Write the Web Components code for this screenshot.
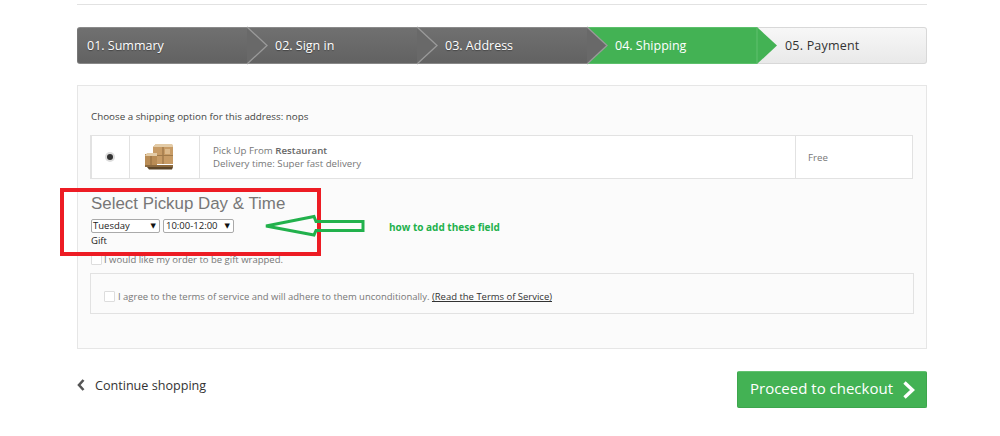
<!DOCTYPE html>
<html lang="en"><head><meta charset="utf-8"><title>Checkout</title>
<style>
html,body{margin:0;background:#fff}
body{font-family:"Open Sans",sans-serif;width:1000px;height:436px;overflow:hidden;position:relative}
</style></head><body>
<checkout-page></checkout-page>
<script>
const def=(name,css,html)=>{customElements.define(name,class extends HTMLElement{
  constructor(){super();this.attachShadow({mode:'open'}).innerHTML=`<style>${css}</style>${typeof html==='function'?html(this):html}`;}
});};
def('step-bar',`
:host{display:flex;height:37px;box-sizing:border-box;font:12.5px/37px "Open Sans",sans-serif}
`,`<slot></slot>`);
def('step-item',`
:host{flex:0 0 170px;display:block;position:relative;box-sizing:border-box;height:37px;padding-left:28px;color:#fff;
 background:linear-gradient(#707070,#626262);border-top:1px solid #8a8a8a;border-bottom:1px solid #888;line-height:35px;text-shadow:0 1px 1px rgba(0,0,0,.35)}
:host([first]){border-radius:3px 0 0 3px;padding-left:9px;border-left:1px solid #777}
:host([active]){background:#43b254;border-color:#5cc06b;text-shadow:none}
:host([last]){background:linear-gradient(#f7f7f7,#e9e9e9);border:1px solid #d8d8d8;border-left:0;border-radius:0 3px 3px 0;color:#333;text-shadow:none;letter-spacing:.2px}
svg{position:absolute;left:100%;top:-1px;width:20px;height:37px;z-index:2;overflow:visible}
`,h=>{
 const a=h.hasAttribute('active');
 const arrow=h.hasAttribute('last')?'':`<svg viewBox="0 0 20 37" aria-hidden="true"><polygon points="0,0 20,18.5 0,37" fill="${a?'#43b254':'#696969'}"/>${a?'<line x1="0" y1="1" x2="0" y2="36" stroke="#60c06e"/>':'<polyline points="0,0 20,18.5 0,37" fill="none" stroke="#9a9a9a" stroke-width="1.3"/>'}</svg>`;
 return `<slot></slot>${arrow}`;
});
def('ship-table',`
:host{display:grid;grid-template-columns:38px 70px 1fr 117px;height:44px;box-sizing:border-box;margin:11px 0 0 -1px;width:823px;background:#fff;border:1px solid #e2e2e2;font-size:9.7px;color:#777;line-height:13px}
div{border-left:1px solid #e2e2e2;display:flex;align-items:center;justify-content:center}
div:first-child{border-left:0}
.t{justify-content:flex-start;padding-left:13px;display:block;padding-top:8px}
.f{justify-content:flex-start;padding-left:12px}
b{font-weight:600;color:#666}
.r{width:6px;height:6px;border-radius:50%;background:#333;box-shadow:0 0 0 2px #ddd;margin-right:1px}
svg{margin-right:9px}
`,`<div><span class="r"></span></div>
<div><svg width="30" height="26" viewBox="0 0 30 26" aria-hidden="true">
<polygon points="8,3 11,0 27,0 28,3 28,20 8,20" fill="#c89c66"/><polygon points="8,3 11,0 27,0 28,3" fill="#e3cba6"/>
<rect x="17.5" y="3" width="1" height="17" fill="#8f6b3e"/><rect x="8" y="11" width="20" height="1" fill="#a07a4a"/><rect x="20" y="5" width="5" height="5" fill="#dcb98a"/>
<rect x="0" y="10" width="12" height="11" fill="#b98c55"/><polygon points="0,12 2,9 12,9 12,12" fill="#e3cba6"/><rect x="5.5" y="12" width="1" height="9" fill="#8f6b3e"/>
<rect x="0" y="21" width="28" height="2" fill="#8c6a3f"/><polygon points="2,23 28,23 27,25.5 4,25.5" fill="#5d4629"/></svg></div>
<div class="t">Pick Up From <b>Restaurant</b><br>Delivery time: Super fast delivery</div>
<div class="f">Free</div>`);
def('fake-select',`
:host{display:inline-flex;align-items:center;justify-content:space-between;box-sizing:border-box;height:14px;border:1px solid #aaa;border-radius:2px;background:#fff;padding:0 3px 0 1px;font:9.5px/12px "Open Sans",sans-serif;color:#222}
i{font:normal 7px/12px "DejaVu Sans",sans-serif;color:#111}
`,`<slot></slot><i>▼</i>`);
def('check-box',`
:host{display:inline-block;box-sizing:border-box;width:11px;height:11px;border:1px solid #ddd;background:#fff;border-radius:1px;vertical-align:middle}
`,``);
def('terms-box',`
:host{display:flex;align-items:center;gap:3px;box-sizing:border-box;width:824px;height:41px;margin:7px 0 0 -1px;border:1px solid #e2e2e2;padding:6px 0 0 13px;font-size:9.48px;color:#777}
a{color:#333;text-decoration:underline}
`,`<check-box></check-box><span>I agree to the terms of service and will adhere to them unconditionally. <a>(Read the Terms of Service)</a></span>`);
def('green-button',`
:host{display:flex;align-items:center;gap:10px;width:190px;height:37px;box-sizing:border-box;background:#43b254;border:1px solid #3da64d;border-top-color:#62c270;border-radius:2px;color:#fff;font:500 15px "Open Sans",sans-serif;padding:0 0 3px 12px}
svg{width:14px;height:18px;margin-top:3px}
`,`<slot></slot><svg viewBox="0 0 14 18" aria-hidden="true"><polyline points="1.5,1.5 9.5,9 1.5,16.5" fill="none" stroke="#fff" stroke-width="3.4"/></svg>`);
def('note-overlay',`
:host{position:absolute;left:0;top:0;width:1000px;height:436px;display:block;pointer-events:none}
.red{position:absolute;left:60px;top:188px;width:261px;height:68px;box-sizing:border-box;border:4px solid #ed1c24}
svg{position:absolute;left:260px;top:210px;width:110px;height:32px;overflow:visible}
p{position:absolute;left:389px;top:221px;margin:0;font:700 10px/13px "Open Sans",sans-serif;color:#22b14c;white-space:nowrap}
`,`<div class="red"></div>
<svg viewBox="0 0 110 32" aria-hidden="true"><polygon points="6,16 54,6.5 56,11.5 103,11.5 103,20.5 56,20.5 54,25" fill="none" stroke="#22b14c" stroke-width="3"/></svg>
<p>how to add these field</p>`);
def('checkout-page',`
:host{display:block;box-sizing:border-box;width:850px;margin-left:77px;padding-top:4px;color:#333}
.top{height:1px;background:#e2e2e2}
step-bar{margin-top:22px}
.panel{margin-top:21px;height:264px;box-sizing:border-box;border:1px solid #e6e6e6;background:#fbfbfb;padding:23px 13px 0}
.lead{font-size:9.8px;line-height:14px;margin:0;color:#444;padding-top:1px}
h2{font:400 16.9px/18px "Liberation Sans",sans-serif;color:#777;margin:16px 0 0}
.sel{display:flex;gap:3px;margin-top:6px}
.gift{font-size:9.5px;line-height:13px;color:#222;margin-top:1px}
.wrap{font-size:9.5px;line-height:13px;color:#777;margin-top:6px;display:flex;gap:2px;align-items:center;height:13px}
.foot{display:flex;justify-content:space-between;align-items:center;margin-top:22px}
.back{display:flex;align-items:center;gap:10px;font:500 12.6px "Open Sans",sans-serif;color:#333;margin-top:-9px}
`,`<div class="top"></div>
<step-bar><step-item first>01. Summary</step-item><step-item>02. Sign in</step-item><step-item>03. Address</step-item><step-item active>04. Shipping</step-item><step-item last>05. Payment</step-item></step-bar>
<div class="panel">
<p class="lead">Choose a shipping option for this address: nops</p>
<ship-table></ship-table>
<h2>Select Pickup Day &amp; Time</h2>
<div class="sel"><fake-select style="width:69px">Tuesday</fake-select><fake-select style="width:71px;padding-left:2px">10:00-12:00</fake-select></div>
<div class="gift">Gift</div>
<div class="wrap"><check-box></check-box><span>I would like my order to be gift wrapped.</span></div>
<terms-box></terms-box>
</div>
<div class="foot"><div class="back"><svg width="8" height="12" viewBox="0 0 8 12" aria-hidden="true"><polyline points="6.5,1 2,6 6.5,11" fill="none" stroke="#555" stroke-width="2.6"/></svg><span>Continue shopping</span></div><green-button>Proceed to checkout</green-button></div>
<note-overlay></note-overlay>`);
</script>
</body></html>
